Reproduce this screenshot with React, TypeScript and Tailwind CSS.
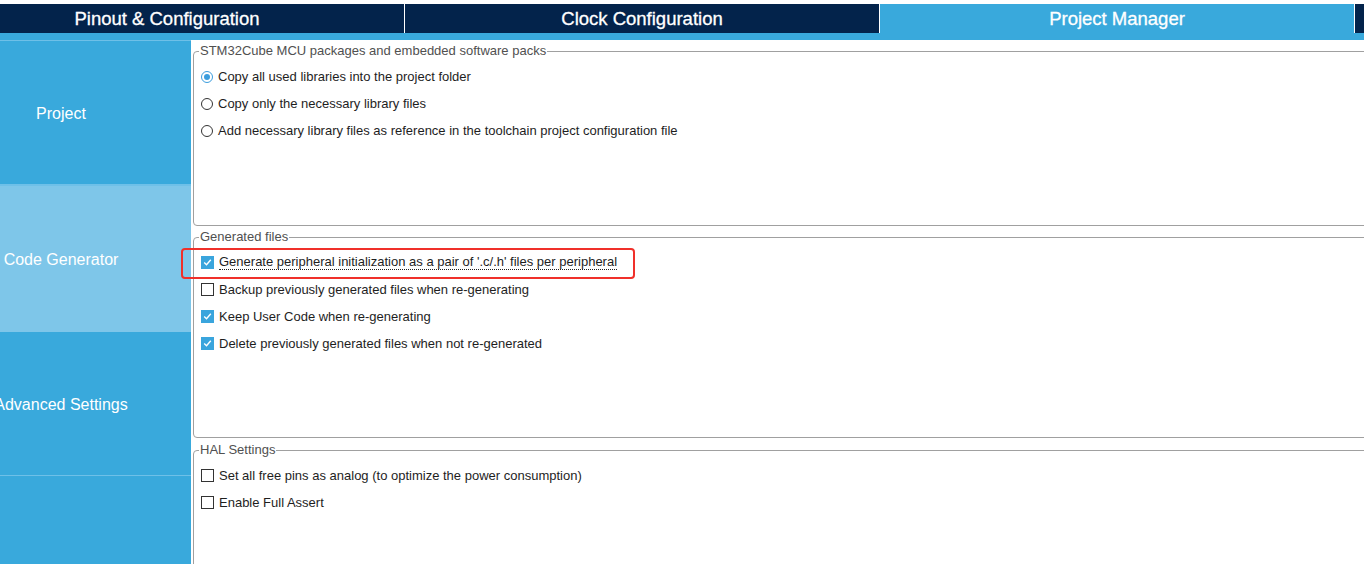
import type { ReactNode } from 'react';

type Opt = { label: string; checked: boolean };

const packOpts: Opt[] = [
  { label: 'Copy all used libraries into the project folder', checked: true },
  { label: 'Copy only the necessary library files', checked: false },
  { label: 'Add necessary library files as reference in the toolchain project configuration file', checked: false },
];

const genOpts: Opt[] = [
  { label: "Generate peripheral initialization as a pair of '.c/.h' files per peripheral", checked: true },
  { label: 'Backup previously generated files when re-generating', checked: false },
  { label: 'Keep User Code when re-generating', checked: true },
  { label: 'Delete previously generated files when not re-generated', checked: true },
];

const halOpts: Opt[] = [
  { label: 'Set all free pins as analog (to optimize the power consumption)', checked: false },
  { label: 'Enable Full Assert', checked: false },
];

function Radio({ checked }: { checked: boolean }) {
  return (
    <span
      className={`flex h-[12px] w-[12px] shrink-0 items-center justify-center rounded-full border bg-white ${
        checked ? 'border-[#3b9ddd]' : 'border-[#333]'
      }`}
    >
      {checked && <span className="h-[6px] w-[6px] rounded-full bg-[#3b9ddd]" />}
    </span>
  );
}

function Check({ checked }: { checked: boolean }) {
  if (!checked) {
    return <span className="h-[13px] w-[13px] shrink-0 border border-[#333] bg-white" />;
  }
  return (
    <span className="flex h-[13px] w-[13px] shrink-0 items-center justify-center bg-[#3aa5dd]">
      <svg width="9" height="9" viewBox="0 0 9 9">
        <path d="M1.2 4.6 L3.5 6.8 L7.8 1.8" fill="none" stroke="#fff" strokeWidth="1.4" />
      </svg>
    </span>
  );
}

function Group({ title, height, children }: { title: string; height: string; children: ReactNode }) {
  return (
    <fieldset className={`w-[1180px] shrink-0 ${height} rounded-[4px] border border-[#a0a0a0] pl-[7px]`}>
      <legend className="ml-[-2px] px-[1px] text-[13px] leading-[14px] text-[#505050]">{title}</legend>
      <div className="pt-[5px]">{children}</div>
    </fieldset>
  );
}

function Row({ children, label, focused }: { children: ReactNode; label: string; focused?: boolean }) {
  return (
    <div className="flex h-[27px] items-center gap-[5px] text-[13px] text-[#1e1e1e]">
      {children}
      <span className={`whitespace-nowrap leading-[14px] ${focused ? 'border-b border-dotted border-[#222]' : ''}`}>
        {label}
      </span>
    </div>
  );
}

function SideItem({ label, active, height }: { label: string; active?: boolean; height: string }) {
  return (
    <div className={`flex ${height} shrink-0 items-center ${active ? 'bg-[#7ec6e9]' : 'bg-[#39a9dc]'}`}>
      <div className="flex w-[122px] justify-center whitespace-nowrap pt-[2px] text-[16px] text-white">{label}</div>
    </div>
  );
}

export default function App() {
  return (
    <div className="relative h-[564px] w-[1364px] overflow-hidden bg-white font-['Liberation_Sans',Arial,sans-serif]">
      <div className="pt-[4px]">
        <div className="flex h-[29px] overflow-hidden bg-[#03234b] text-[18.5px] text-white [-webkit-text-stroke:0.3px_white]">
          <div className="ml-[-70px] flex w-[474px] shrink-0 items-center justify-center">Pinout &amp; Configuration</div>
          <div className="w-[1px] shrink-0 bg-white" />
          <div className="flex w-[474px] shrink-0 items-center justify-center">Clock Configuration</div>
          <div className="w-[1px] shrink-0 bg-white" />
          <div className="flex w-[474px] shrink-0 items-center justify-center bg-[#39a9dc]">Project Manager</div>
          <div className="w-[1px] shrink-0 bg-white" />
        </div>
        <div className="h-[7px] bg-[#39a9dc]" />
      </div>

      <div className="flex h-[524px]">
        <div className="flex w-[191px] shrink-0 flex-col bg-[#39a9dc]">
          <div className="h-[1px] shrink-0 bg-[#6ec0e8]" />
          <SideItem label="Project" height="h-[143px]" />
          <div className="h-[2px] shrink-0 bg-[#6ec0e8]" />
          <SideItem label="Code Generator" active height="h-[146px]" />
          <SideItem label="Advanced Settings" height="h-[143px]" />
          <div className="h-[1px] shrink-0 bg-[#6ec0e8]" />
        </div>

        <div className="flex flex-1 flex-col gap-[4px] overflow-hidden pl-[2px] pt-[4px]">
          <Group title="STM32Cube MCU packages and embedded software packs" height="h-[182px]">
            {packOpts.map((o) => (
              <Row key={o.label} label={o.label}>
                <Radio checked={o.checked} />
              </Row>
            ))}
          </Group>
          <Group title="Generated files" height="h-[208px]">
            {genOpts.map((o, i) => (
              <Row key={o.label} label={o.label} focused={i === 0}>
                <Check checked={o.checked} />
              </Row>
            ))}
          </Group>
          <div className="mt-[1px] shrink-0">
            <Group title="HAL Settings" height="h-[140px]">
              {halOpts.map((o) => (
                <Row key={o.label} label={o.label}>
                  <Check checked={o.checked} />
                </Row>
              ))}
            </Group>
          </div>
        </div>
      </div>

      {/* red annotation box around the first generated-files option */}
      <div className="absolute left-[181px] top-[248px] h-[31px] w-[454px] rounded-[4px] border-[2.5px] border-[#f0302a]" />
    </div>
  );
}
